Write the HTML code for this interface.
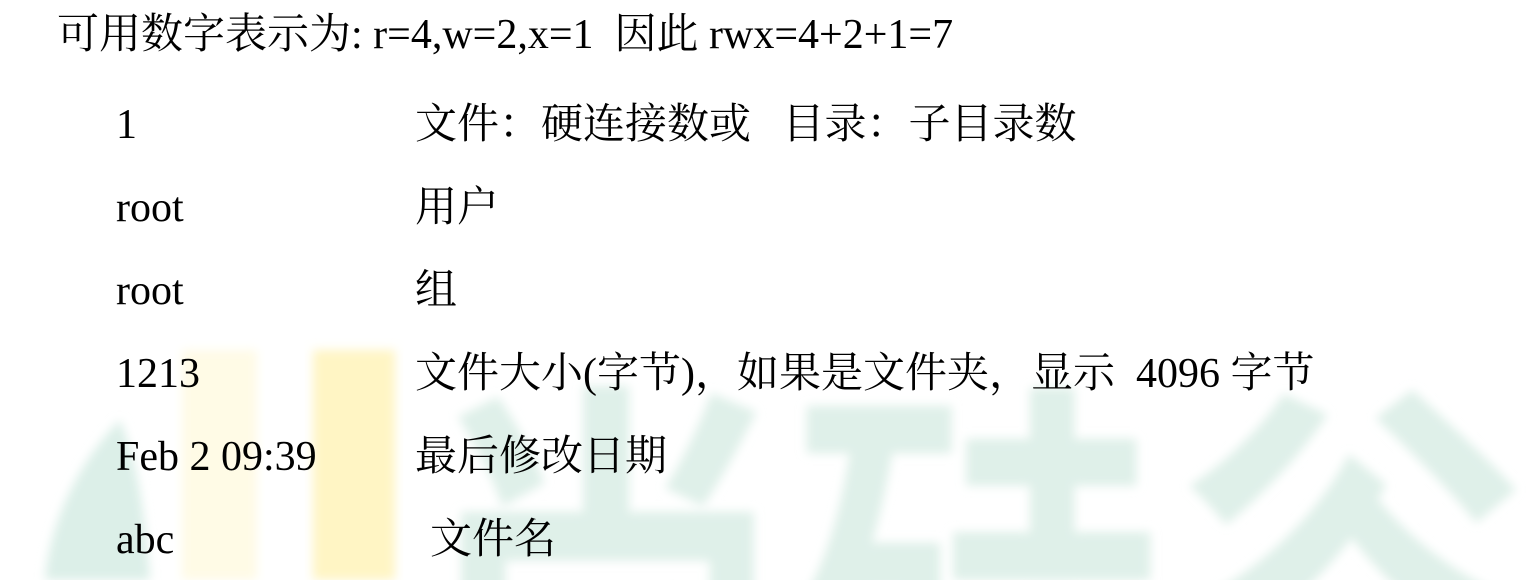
<!DOCTYPE html>
<html><head><meta charset="utf-8"><style>
html,body{margin:0;padding:0;background:#fff;width:1540px;height:580px;overflow:hidden;position:relative;font-family:"Liberation Serif","Noto Serif CJK SC",serif;color:#000}
.t{position:absolute;font-size:42px;line-height:44px;white-space:pre}
.wm{position:absolute;left:0;top:0;width:1540px;height:580px;overflow:hidden}
</style></head><body>
<svg class="wm" width="1540" height="580" viewBox="0 0 1540 580">
<defs><filter id="b"><feGaussianBlur stdDeviation="5"/></filter></defs>
<rect x="182" y="350" width="75" height="230" fill="#fffbe6" filter="url(#b)"/>
<rect x="313" y="350" width="82" height="230" fill="#fff5c4" filter="url(#b)"/>
<g filter="url(#b)">
<path d="M120 420 C80 460 50 520 45 580 L150 580 C145 520 140 470 120 420Z" fill="#dcefe8"/>
<text x="420" y="760" font-size="440" font-family="Noto Sans CJK SC, sans-serif" font-weight="bold" fill="#dff0e9" textLength="1120" lengthAdjust="spacingAndGlyphs">尚硅谷</text>
</g>
</svg>
<div class="t" style="left:57px;top:13px">可用数字表示为: r=4,w=2,x=1  因此 rwx=4+2+1=7</div>
<div class="t" style="left:116px;top:103px">1</div><div class="t" style="left:415px;top:103px">文件：硬连接数或   目录：子目录数</div>
<div class="t" style="left:116px;top:186px">root</div><div class="t" style="left:415px;top:186px">用户</div>
<div class="t" style="left:116px;top:269px">root</div><div class="t" style="left:415px;top:269px">组</div>
<div class="t" style="left:116px;top:352px">1213</div><div class="t" style="left:415px;top:352px">文件大小(字节)，如果是文件夹，显示  4096 字节</div>
<div class="t" style="left:116px;top:435px">Feb 2 09:39</div><div class="t" style="left:415px;top:435px">最后修改日期</div>
<div class="t" style="left:116px;top:518px">abc</div><div class="t" style="left:430px;top:518px">文件名</div>
</body></html>
